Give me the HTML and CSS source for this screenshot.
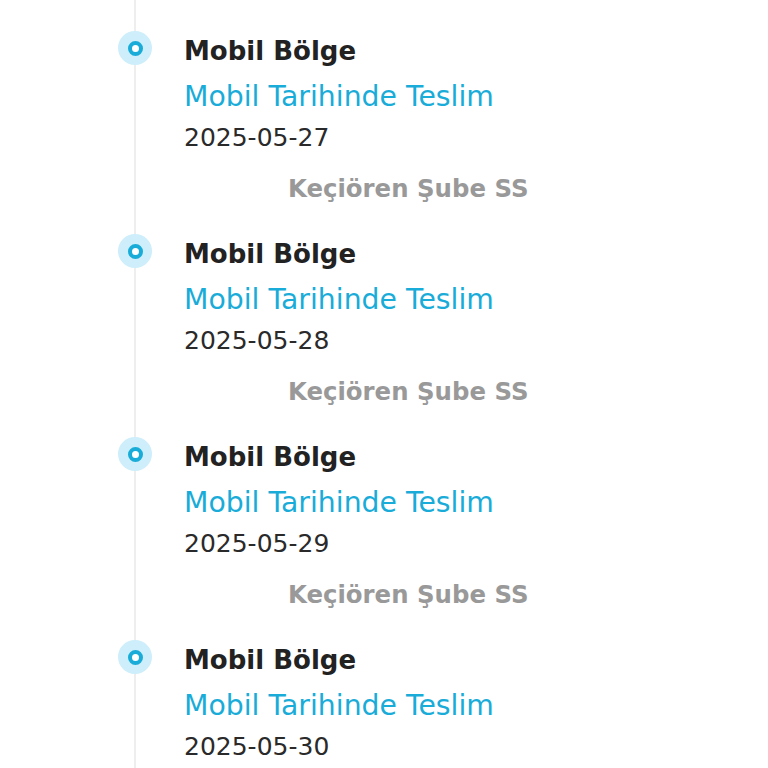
FILE: index.html
```
<!DOCTYPE html>
<html lang="tr">
<head>
  <meta charset="UTF-8">
  <meta name="viewport" content="width=device-width, initial-scale=1.0">
  <title>Kargo Takip</title>
  <link rel="stylesheet" href="styles.css">
</head>
<body>
    <ul class="timeline">
        <li class="step">
            <span class="dot"></span>
            <div class="place">Mobil Bölge</div>
            <div class="status">Mobil Tarihinde Teslim</div>
            <div class="date">2025-05-26</div>
            <div class="branch">Keçiören Şube SS</div>
        </li>
        <li class="step">
            <span class="dot"></span>
            <div class="place">Mobil Bölge</div>
            <div class="status">Mobil Tarihinde Teslim</div>
            <div class="date">2025-05-27</div>
            <div class="branch">Keçiören Şube SS</div>
        </li>
        <li class="step">
            <span class="dot"></span>
            <div class="place">Mobil Bölge</div>
            <div class="status">Mobil Tarihinde Teslim</div>
            <div class="date">2025-05-28</div>
            <div class="branch">Keçiören Şube SS</div>
        </li>
        <li class="step">
            <span class="dot"></span>
            <div class="place">Mobil Bölge</div>
            <div class="status">Mobil Tarihinde Teslim</div>
            <div class="date">2025-05-29</div>
            <div class="branch">Keçiören Şube SS</div>
        </li>
        <li class="step">
            <span class="dot"></span>
            <div class="place">Mobil Bölge</div>
            <div class="status">Mobil Tarihinde Teslim</div>
            <div class="date">2025-05-30</div>
            <div class="branch">Keçiören Şube SS</div>
        </li>
    </ul>
</body>
</html>
```

FILE: styles.css
```
body {
    font-family: "DejaVu Sans", sans-serif;
    margin: 0;
    background: #fff;
    overflow: hidden;
}
.timeline {
    list-style: none;
    margin: -203px 0 0;
    padding: 0 0 0 184px;
    position: relative;
}
.timeline::before {
    content: "";
    position: absolute;
    top: 0;
    bottom: 0;
    left: 134px;
    width: 2px;
    background: #eeeeee;
}
.step {
    position: relative;
    height: 203px;
}
.dot {
    position: absolute;
    left: -66px;
    top: 31px;
    width: 34px;
    height: 34px;
    border-radius: 50%;
    background: #cdeefa;
}
.dot::after {
    content: "";
    position: absolute;
    left: 9.5px;
    top: 9.5px;
    width: 7px;
    height: 7px;
    border: 4px solid #19acd9;
    border-radius: 50%;
    background: #fff;
}
.place {
    padding-top: 33px;
    font-size: 26px;
    font-weight: bold;
    line-height: 36px;
    color: #222;
}
.status {
    margin-top: 10px;
    font-size: 28.3px;
    line-height: 36px;
    color: #19acd9;
}
.date {
    margin-top: 5px;
    font-size: 25px;
    line-height: 36px;
    color: #2a2a2a;
}
.branch {
    margin-top: 15px;
    padding-left: 104px;
    font-size: 24.4px;
    font-weight: bold;
    line-height: 36px;
    color: #999;
}
```
